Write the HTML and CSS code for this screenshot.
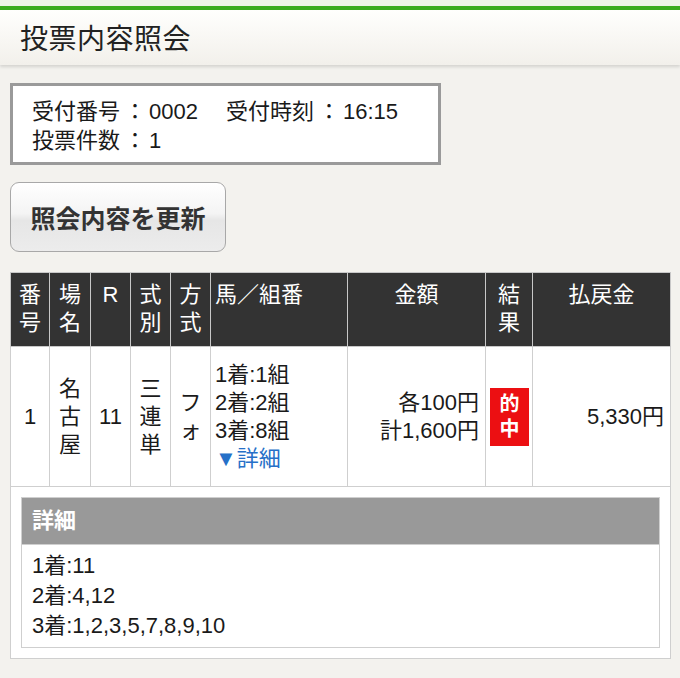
FILE: index.html
```html
<!DOCTYPE html>
<html lang="ja">
<head>
<meta charset="utf-8">
<title>投票内容照会</title>
<link rel="stylesheet" href="styles.css">
</head>
<body>
<div class="strip"></div>
<header class="header"><h1 class="title">投票内容照会</h1></header>
<main class="content">
  <div class="info">
    <p class="info-line">受付番号<span class="colon">：</span>0002<span class="gap"></span>受付時刻<span class="colon">：</span>16:15</p>
    <p class="info-line">投票件数<span class="colon">：</span>1</p>
  </div>
  <button class="refresh" type="button">照会内容を更新</button>
  <table class="bets">
    <colgroup>
      <col class="c-no"><col class="c-place"><col class="c-r"><col class="c-type"><col class="c-method"><col class="c-horse"><col class="c-amount"><col class="c-result"><col class="c-pay">
    </colgroup>
    <thead>
      <tr>
        <th>番号</th>
        <th>場名</th>
        <th>R</th>
        <th>式別</th>
        <th>方式</th>
        <th class="th-left">馬／組番</th>
        <th>金額</th>
        <th>結果</th>
        <th>払戻金</th>
      </tr>
    </thead>
    <tbody>
      <tr class="row">
        <td>1</td>
        <td>名古屋</td>
        <td>11</td>
        <td>三連単</td>
        <td>フォ</td>
        <td class="td-left">1着:1組<br>2着:2組<br>3着:8組<br><span class="more">▼詳細</span></td>
        <td class="td-right">各100円<br>計1,600円</td>
        <td><span class="hit">的中</span></td>
        <td class="td-right td-pay">5,330円</td>
      </tr>
      <tr class="detail-row">
        <td colspan="9" class="detail-cell">
          <div class="detail">
            <div class="detail-head">詳細</div>
            <div class="detail-body">1着:11<br>2着:4,12<br>3着:1,2,3,5,7,8,9,10</div>
          </div>
        </td>
      </tr>
    </tbody>
  </table>
</main>
</body>
</html>
```
FILE: styles.css
```css
html, body {
  margin: 0;
  padding: 0;
}
body {
  background: #f3f2ee;
  color: #1a1a1a;
  font-family: "Liberation Sans", "Noto Sans CJK JP", sans-serif;
  width: 680px;
  height: 678px;
  overflow: hidden;
}
.strip {
  height: 6px;
  background: #eef4e8;
}
.header {
  border-top: 4px solid #3aab1f;
  height: 59px;
  box-sizing: border-box;
  background: linear-gradient(#fffffd, #f2f0eb);
  box-shadow: 0 2px 3px rgba(0, 0, 0, 0.13);
  padding: 3px 20px 0;
}
.title {
  margin: 0;
  font-size: 28px;
  font-weight: normal;
  line-height: 53px;
  color: #222;
  letter-spacing: 0.5px;
}
.content {
  padding: 18px 10px 0;
}
.info {
  width: 431px;
  box-sizing: border-box;
  height: 82px;
  border: 3px solid #9a9a9a;
  background: #fff;
  padding: 11px 19px;
}
.info-line {
  margin: 0;
  font-size: 22px;
  line-height: 29px;
  color: #1a1a1a;
}
.colon {
  margin: 0 3px 0 4px;
}
.gap {
  display: inline-block;
  width: 28px;
}
.refresh {
  display: block;
  margin-top: 17px;
  width: 216px;
  height: 70px;
  border: 1px solid #a8a8a8;
  border-radius: 9px;
  background: linear-gradient(#ffffff 0%, #f4f4f4 45%, #e6e6e6 55%, #ececec 100%);
  box-shadow: inset 0 1px 0 #fff;
  font-family: "Liberation Sans", "Noto Sans CJK JP", sans-serif;
  font-size: 25px;
  font-weight: bold;
  color: #333;
  padding: 0;
}
.bets {
  margin-top: 20px;
  width: 660px;
  border-collapse: collapse;
  table-layout: fixed;
}
.c-no { width: 39px; }
.c-place { width: 41px; }
.c-r { width: 40px; }
.c-type { width: 40px; }
.c-method { width: 40px; }
.c-horse { width: 137px; }
.c-amount { width: 138px; }
.c-result { width: 47px; }
.c-pay { width: 138px; }
.bets th {
  background: #333;
  color: #fff;
  font-weight: normal;
  font-size: 22px;
  line-height: 28px;
  height: 74px;
  box-sizing: border-box;
  padding: 8px 3px 0;
  vertical-align: top;
  text-align: center;
  border: 1px solid #c8c8c8;
}
.bets .th-left {
  text-align: left;
  padding-left: 4px;
}
.row td {
  background: #fff;
  font-size: 22px;
  line-height: 28px;
  height: 140px;
  box-sizing: border-box;
  padding: 0 4px;
  text-align: center;
  vertical-align: middle;
  border: 1px solid #cfcfcf;
  color: #1a1a1a;
}
.row .td-left {
  text-align: left;
  padding-left: 4px;
}
.row .td-right {
  text-align: right;
  padding-right: 6px;
}
.row .td-pay {
  padding-right: 6px;
}
.more {
  color: #2670c8;
}
.hit {
  display: inline-block;
  width: 39px;
  background: #ec0f12;
  color: #fff;
  font-size: 20px;
  font-weight: bold;
  line-height: 25px;
  padding: 4px 0;
  vertical-align: middle;
}
.detail-cell {
  background: #fff;
  border: 1px solid #cfcfcf;
  padding: 10px 10px 10px;
}
.detail {
  border: 1px solid #cfcfcf;
}
.detail-head {
  background: #999;
  color: #fff;
  font-weight: bold;
  font-size: 22px;
  height: 46px;
  line-height: 46px;
  padding-left: 10px;
}
.detail-body {
  background: #fff;
  border-top: 1px solid #cfcfcf;
  font-size: 22px;
  line-height: 30px;
  padding: 6px 10px 6px;
  color: #1a1a1a;
}
```
